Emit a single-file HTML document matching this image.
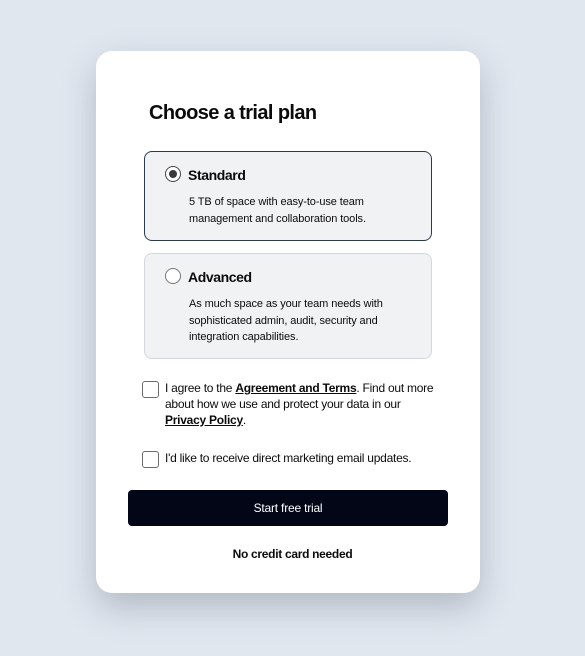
<!DOCTYPE html>
<html><head><style>
*{margin:0;padding:0;box-sizing:border-box}
body{width:585px;height:656px;background:#e1e7ef;font-family:"Liberation Sans",Arial,sans-serif;color:#0b0b0b;position:relative;overflow:hidden}
.card{position:absolute;left:96px;top:51px;width:384px;height:542px;background:#fff;border-radius:16px;box-shadow:0 14px 34px rgba(40,50,70,.25)}
.a{position:absolute;white-space:nowrap}
.box{position:absolute;left:144px;width:288px;background:#f1f2f4;border-radius:8px}
.radio{position:absolute;width:16px;height:16px;border-radius:50%;background:#fff;border:1.5px solid #777}
.rt{font-size:14px;font-weight:bold;letter-spacing:-0.4px}
.d{font-size:11px;line-height:16.5px;letter-spacing:-0.1px}
.cb{position:absolute;left:142px;width:17px;height:17px;border:1.5px solid #6b6b6b;border-radius:3px;background:#fff}
.t{font-size:12px;line-height:16px;letter-spacing:-0.25px}
u{font-weight:bold;text-decoration:underline}
</style></head><body>
<div class="card"></div>
<div class="a" style="left:149px;top:102px;font-size:20px;font-weight:bold;letter-spacing:-0.6px">Choose a trial plan</div>

<div class="box" style="top:151px;height:90px;border:1px solid #2c3a4f"></div>
<div class="radio" style="left:165px;top:166px;border-color:#444"><div style="position:absolute;left:2.5px;top:2.5px;width:8px;height:8px;border-radius:50%;background:#3a3a3a"></div></div>
<div class="a rt" style="left:188px;top:167px">Standard</div>
<div class="a d" style="left:189px;top:194px">5 TB of space with easy-to-use team<br>management and collaboration tools.</div>

<div class="box" style="top:253px;height:106px;border:1px solid #d3d7dd"></div>
<div class="radio" style="left:165px;top:268px"></div>
<div class="a rt" style="left:188px;top:269px">Advanced</div>
<div class="a d" style="left:189px;top:296px">As much space as your team needs with<br>sophisticated admin, audit, security and<br>integration capabilities.</div>

<div class="cb" style="top:381px"></div>
<div class="a t" style="left:165px;top:380px">I agree to the <u>Agreement and Terms</u>. Find out more<br>about how we use and protect your data in our<br><u>Privacy Policy</u>.</div>

<div class="cb" style="top:451px"></div>
<div class="a t" style="left:165px;top:450px">I'd like to receive direct marketing email updates.</div>

<div style="position:absolute;left:128px;top:490px;width:320px;height:36px;background:#020617;border-radius:4px;color:#fff;font-size:12px;text-align:center;line-height:36px;letter-spacing:-0.2px">Start free trial</div>
<div class="a" style="left:0;width:585px;text-align:center;top:547px;font-size:12px;font-weight:bold;letter-spacing:-0.3px">No credit card needed</div>
</body></html>
